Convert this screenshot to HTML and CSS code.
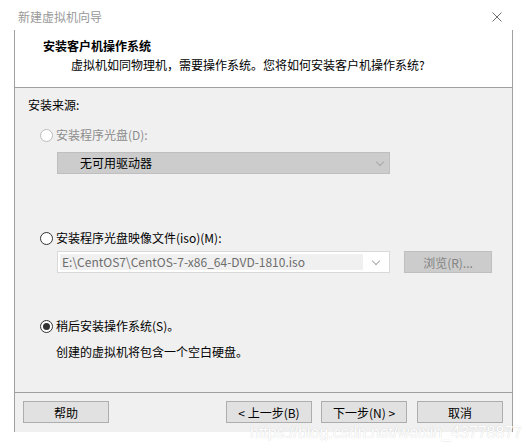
FILE: index.html
```html
<!DOCTYPE html>
<html>
  <head>
    <meta charset="utf-8">
    <title>新建虚拟机向导</title>
    <link rel="stylesheet" href="styles.css">
  </head>
  <body>
    <div class="title-bar">
      <span class="title">新建虚拟机向导</span>
      <svg class="close" width="10" height="10" viewBox="0 0 10 10">
        <path d="M0.5 0.5 L9.5 9.5 M9.5 0.5 L0.5 9.5" stroke="#6e6e6e" stroke-width="1" fill="none"/>
      </svg>
    </div>
    <div class="frame">
      <div class="header">
        <div class="header-title">安装客户机操作系统</div>
        <div class="header-sub">虚拟机如同物理机，需要操作系统。您将如何安装客户机操作系统?</div>
      </div>
      <div class="content">
        <div class="source">安装来源:</div>

        <div class="radio-row disabled row-disc">
          <span class="radio"></span>
          <span>安装程序光盘(D):</span>
        </div>
        <div class="combo combo-disc">
          <span class="combo-text">无可用驱动器</span>
          <span class="chevron"></span>
        </div>

        <div class="radio-row row-iso">
          <span class="radio"></span>
          <span>安装程序光盘映像文件(iso)(M):</span>
        </div>
        <div class="iso-row">
          <div class="combo combo-iso">
            <span class="combo-text">E:\CentOS7\CentOS-7-x86_64-DVD-1810.iso</span>
            <span class="chevron-box"><span class="chevron"></span></span>
          </div>
          <button class="btn btn-disabled">浏览(R)...</button>
        </div>

        <div class="radio-row row-later">
          <span class="radio checked"></span>
          <span>稍后安装操作系统(S)。</span>
        </div>
        <div class="note">创建的虚拟机将包含一个空白硬盘。</div>
      </div>
      <div class="footer">
        <button class="btn">帮助</button>
        <div class="nav">
          <button class="btn">&lt; 上一步(B)</button>
          <button class="btn">下一步(N) &gt;</button>
          <button class="btn btn-cancel">取消</button>
        </div>
      </div>
    </div>
    <div class="watermark">https://blog.csdn.net/weixin_43778877</div>
  </body>
</html>
```
FILE: styles.css
```css
body {
  margin: 0;
  background-color: #ffffff;
  font-family: "Noto Sans CJK SC", "Noto Sans", sans-serif;
  font-size: 12px;
  line-height: 18px;
  color: #000;
  position: relative;
  width: 532px;
  height: 445px;
  overflow: hidden;
}
.title-bar {
  width: 512px;
  height: 30px;
  box-sizing: border-box;
  padding: 0 10px 0 18px;
  display: flex;
  align-items: center;
  justify-content: space-between;
}
.title {
  color: #999;
  font-size: 12px;
  margin-top: 4px;
}
.close {
  margin-top: 4px;
}
.frame {
  margin-left: 14px;
  width: 499px;
  box-sizing: border-box;
  border-left: 1px solid #a0a0a0;
  border-right: 1px solid #a0a0a0;
}
.header {
  height: 58px;
  box-sizing: border-box;
  padding: 7px 0 0 28px;
  background-color: #fff;
  border-bottom: 1px solid #a0a0a0;
}
.header-title {
  font-weight: bold;
}
.header-sub {
  margin-top: 1px;
  padding-left: 28px;
}
.content {
  height: 304px;
  box-sizing: border-box;
  padding: 8px 0 0 13px;
  background-color: #f0f0f0;
}
.radio-row {
  display: flex;
  align-items: center;
  height: 18px;
  margin-left: 12px;
}
.radio {
  width: 11px;
  height: 11px;
  border: 1px solid #333;
  border-radius: 50%;
  background: #fff;
  margin-right: 3px;
  position: relative;
}
.radio.checked::after {
  content: "";
  position: absolute;
  left: 2px;
  top: 2px;
  width: 7px;
  height: 7px;
  border-radius: 50%;
  background: #333;
}
.disabled {
  color: #8d8d8d;
}
.disabled .radio {
  border-color: #bcbcbc;
}
.row-disc {
  margin-top: 12px;
}
.row-iso {
  margin-top: 55px;
}
.row-later {
  margin-top: 44px;
}
.combo {
  width: 333px;
  height: 22px;
  box-sizing: border-box;
  margin-left: 29px;
  display: flex;
  align-items: center;
  justify-content: space-between;
}
.combo-disc {
  margin-top: 8px;
  background-color: #cccccc;
  border: 1px solid #bfbfbf;
  padding: 0 6px 0 22px;
}
.chevron {
  width: 5px;
  height: 5px;
  border-right: 1px solid #a8a8a8;
  border-bottom: 1px solid #a8a8a8;
  transform: rotate(45deg);
  margin-top: -3px;
}
.iso-row {
  display: flex;
  align-items: center;
  margin-top: 4px;
}
.combo-iso {
  background-color: #fff;
  border: 1px solid #d9d9d9;
  padding: 2px 0 2px 2px;
  align-items: stretch;
}
.combo-iso .combo-text {
  flex: 1;
  background-color: #f0f0f0;
  color: #6d6d6d;
  padding-left: 2px;
  line-height: 16px;
}
.chevron-box {
  width: 26px;
  display: flex;
  align-items: center;
  justify-content: center;
}
.note {
  margin-top: 8px;
  margin-left: 28px;
}
.btn {
  width: 86px;
  height: 22px;
  box-sizing: border-box;
  background-color: #e1e1e1;
  border: 1px solid #adadad;
  font-family: inherit;
  font-size: 12px;
  color: #000;
  padding: 0;
}
.btn-disabled {
  width: 88px;
  margin-left: 14px;
  background-color: #cccccc;
  border-color: #bfbfbf;
  color: #838383;
}
.footer {
  height: 40px;
  box-sizing: border-box;
  border-top: 1px solid #a0a0a0;
  background-color: #f0f0f0;
  padding: 8px 9px 0 8px;
  display: flex;
  justify-content: space-between;
  align-items: flex-start;
}
.nav {
  display: flex;
  gap: 9px;
}
.nav .btn-cancel {
  margin-left: 1px;
}
.watermark {
  position: absolute;
  left: 250px;
  top: 424px;
  font-family: "Liberation Sans", sans-serif;
  font-size: 16px;
  color: #ffffff;
  text-shadow: 0 0 1px rgba(0, 0, 0, 0.22);
  white-space: nowrap;
}
```
